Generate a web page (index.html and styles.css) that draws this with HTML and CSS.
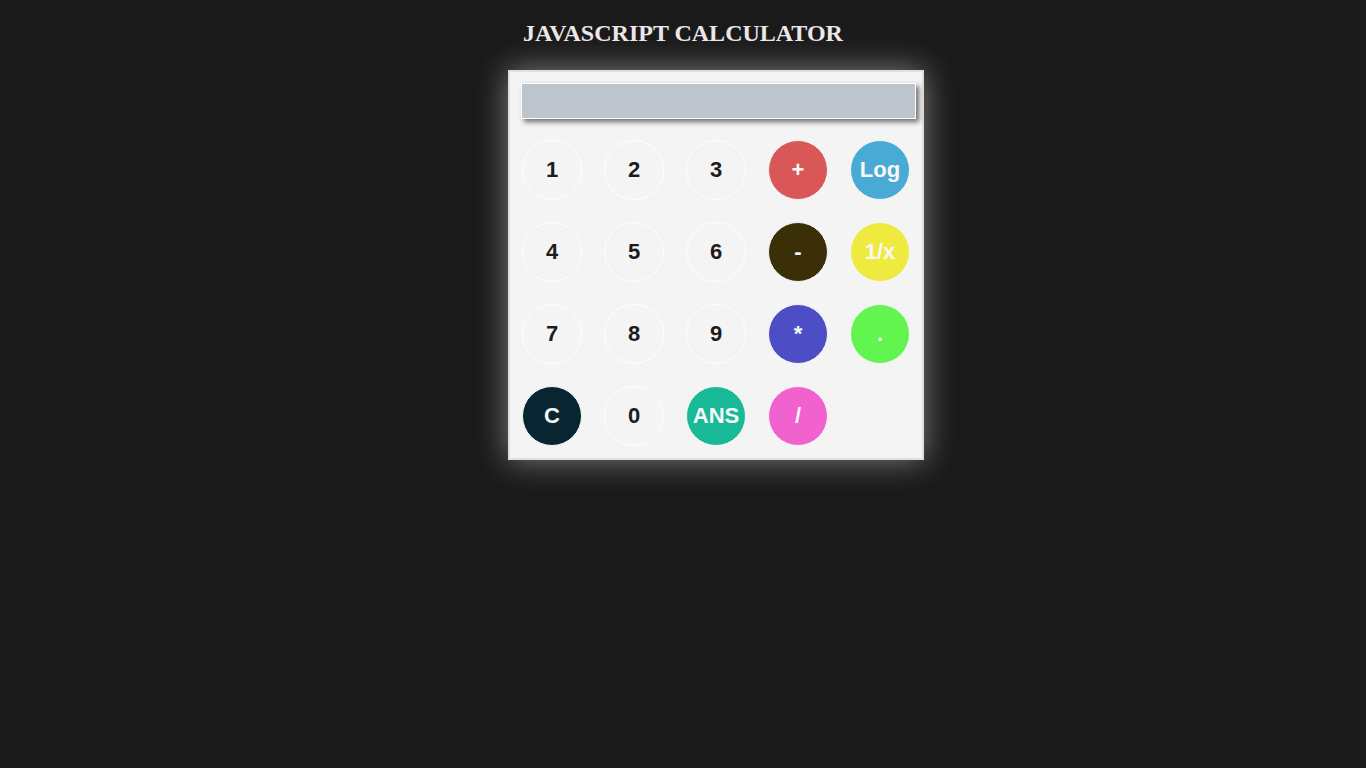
FILE: index.html
```html
<!DOCTYPE html>
<html>
<head>
<meta charset="utf-8">
<link rel="stylesheet" href="styles.css">
</head>
<body>
<h2 class="title">JAVASCRIPT CALCULATOR</h2>
<div class="calc">
  <div class="display"></div>
  <div class="keys">
    <div class="key num">1</div>
    <div class="key num">2</div>
    <div class="key num">3</div>
    <div class="key op plus">+</div>
    <div class="key op log">Log</div>
    <div class="key num">4</div>
    <div class="key num">5</div>
    <div class="key num">6</div>
    <div class="key op minus">-</div>
    <div class="key op inv">1/x</div>
    <div class="key num">7</div>
    <div class="key num">8</div>
    <div class="key num">9</div>
    <div class="key op mul">*</div>
    <div class="key op dot">.</div>
    <div class="key op clear">C</div>
    <div class="key num">0</div>
    <div class="key op ans">ANS</div>
    <div class="key op div">/</div>
  </div>
</div>
</body>
</html>
```
FILE: styles.css
```css
html, body {
  margin: 0;
  padding: 0;
}
body {
  background: #1b1a1b;
  min-height: 768px;
  padding-top: 19px;
  box-sizing: border-box;
}
.title {
  margin: 0;
  text-align: center;
  font-family: "Liberation Serif", "Times New Roman", serif;
  font-weight: bold;
  font-size: 24px;
  line-height: 28px;
  color: #ece6e6;
}
.calc {
  margin-top: 23px;
  margin-left: calc(50% - 175px);
  width: 416px;
  height: 390px;
  box-sizing: border-box;
  border: 2px solid #e2dedb;
  background: #f4f4f4;
  box-shadow: 0 0 30px rgba(255, 255, 255, 0.45);
  padding: 11px 0 0 11px;
}
.display {
  width: 395px;
  height: 36px;
  box-sizing: border-box;
  background: #bec4cc;
  border: 1px solid #ffffff;
  box-shadow: 3px 3px 5px rgba(0, 0, 0, 0.55);
}
.keys {
  margin-top: 21px;
  margin-left: 1px;
  display: grid;
  grid-template-columns: repeat(5, 60px);
  grid-auto-rows: 60px;
  column-gap: 22px;
  row-gap: 22px;
}
.key {
  width: 60px;
  height: 60px;
  box-sizing: border-box;
  border-radius: 50%;
  display: flex;
  align-items: center;
  justify-content: center;
  font-family: "Liberation Sans", Arial, sans-serif;
  font-weight: bold;
  font-size: 22px;
}
.num {
  border: 1px solid #ffffff;
  color: #1c1c1c;
}
.op {
  border: 1px solid #f4f4f4;
  color: #f8f8f8;
}
.plus { background: #d95757; }
.log { background: #4aaad6; }
.minus { background: #3b2f08; }
.inv { background: #eeeb3e; }
.mul { background: #4d4dc6; }
.dot { background: #62f550; }
.clear { background: #092532; }
.ans { background: #17b996; }
.div { background: #f262ce; }
```
